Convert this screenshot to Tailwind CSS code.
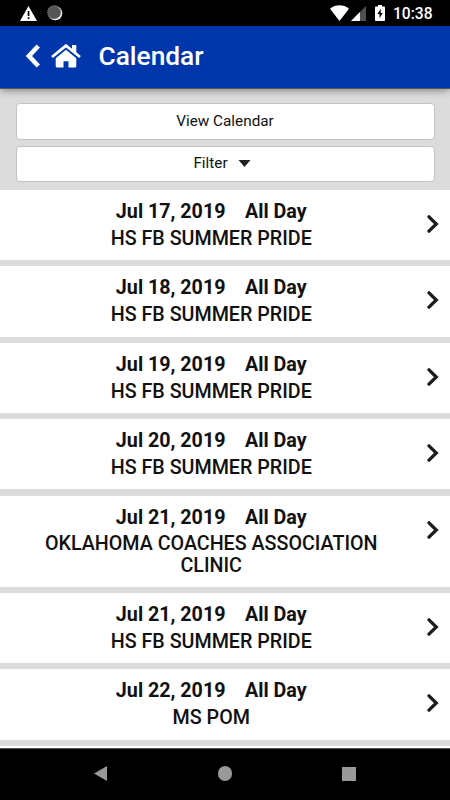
<!DOCTYPE html>
<html lang="en">
<head>
<meta charset="utf-8">
<title>Calendar</title>
<script src="https://cdn.jsdelivr.net/npm/@tailwindcss/browser@4"></script>
</head>
<body class="w-[450px] h-[800px] overflow-hidden bg-[#dcdcdc] font-['Roboto',sans-serif] text-[#111] flex flex-col">
<div class="h-[26px] shrink-0 bg-black text-white flex items-center pl-5 pr-[17px]">
  <svg class="w-[17px] h-[15px]" viewBox="0 0 17 15"><path d="M8.5 0L17 15H0z" fill="#fff"/><path d="M7.7 5h1.7v5H7.7zM7.7 11.2h1.7v1.7H7.7z" fill="#000"/></svg>
  <svg class="w-4 h-4 ml-[10px]" viewBox="0 0 16 16"><circle cx="8.3" cy="8.3" r="7" fill="#fff"/><circle cx="7.3" cy="7.3" r="6.6" fill="#555" stroke="#888" stroke-width="1.2" stroke-dasharray="1 1"/></svg>
  <div class="grow"></div>
  <svg class="w-[19px] h-[16px]" viewBox="0 0 19 16"><path d="M0 3.800C5.500-.8 13.500-.8 19 3.800L9.500 16z" fill="#fff"/></svg>
  <svg class="w-[15px] h-[15px] ml-[2px] mt-px" viewBox="0 0 16 16"><path d="M16 0V16H0z" fill="#505050"/><path d="M9.500 6.500V16H0z" fill="#fff"/></svg>
  <svg class="w-[10px] h-4 ml-[9px]" viewBox="0 0 10 16"><path d="M3 0h4v1.500h2q1 0 1 1V15q0 1-1 1H1q-1 0-1-1V2.500q0-1 1-1h2z" fill="#fff"/><path d="M5.700 3.700L2.500 9h2v4.300L7.700 8h-2z" fill="#000"/></svg>
  <span class="ml-[8px] mt-[3px] text-[15.600px] leading-none font-medium w-[40px] whitespace-nowrap">10:38</span>
</div>
<header class="relative z-10 h-[62px] shrink-0 bg-[#0036ab] flex items-center pl-[26px] text-white shadow-[0_1px_0_#555,0_2px_8px_rgba(0,0,0,.45)]">
  <svg class="w-[14px] h-[24px] mt-[-2px]" viewBox="0 0 14 24"><path d="M12.300 2L3 12l9.300 10" fill="none" stroke="#fff" stroke-width="4.600"/></svg>
  <svg class="w-[30px] h-6 ml-[11px] mt-[-2px]" viewBox="0 0 30 24"><path d="M1 13L15 1.600 29 13" fill="none" stroke="#fff" stroke-width="2.800"/><path d="M21 1h4.300v9.200L21 6.500zM15 5.700L25.300 14.200V22q0 1.500-1.500 1.500H17.500v-6.200h-5v6.200H6.200Q4.700 23.500 4.700 22v-7.800z" fill="#fff"/></svg>
  <h1 class="ml-[17.500px] mt-[-2px] text-[26.300px] leading-8 font-medium">Calendar</h1>
</header>
<div class="h-[102px] shrink-0 px-[15.500px] pt-[15px] flex flex-col gap-[6px] text-[15.300px]">
  <button class="h-[37px] w-full rounded bg-white border border-[#c3c3c3]">View Calendar</button>
  <button class="h-[36px] w-full rounded bg-white border border-[#c3c3c3] flex items-center justify-center gap-[10px] pr-[6px] pb-px">Filter<svg class="w-[13px] h-[7px]" viewBox="0 0 12 7"><path d="M0 0h12L6 7z" fill="#222"/></svg></button>
</div>
<main id="list" class="grow overflow-hidden flex flex-col gap-[6.200px]"></main>
<nav class="h-[52px] shrink-0 bg-black border-t border-[#555] flex items-center pl-[94px] pb-[2px]">
  <svg class="w-[13px] h-[15px]" viewBox="0 0 13 15"><path d="M13 0v15L0 7.500z" fill="#999"/></svg>
  <div class="ml-[110.500px] w-[14.500px] h-[14.500px] rounded-full bg-[#999]"></div>
  <div class="ml-[110px] w-[14px] h-[14px] bg-[#999]"></div>
</nav>
<script>
const events = [
  ['Jul 17, 2019', 'HS FB SUMMER PRIDE'],
  ['Jul 18, 2019', 'HS FB SUMMER PRIDE'],
  ['Jul 19, 2019', 'HS FB SUMMER PRIDE'],
  ['Jul 20, 2019', 'HS FB SUMMER PRIDE'],
  ['Jul 21, 2019', 'OKLAHOMA COACHES ASSOCIATION CLINIC'],
  ['Jul 21, 2019', 'HS FB SUMMER PRIDE'],
  ['Jul 22, 2019', 'MS POM'],
  ['', '']
];
document.getElementById('list').innerHTML = events.map(([date, title]) => `
  <article class="shrink-0 min-h-[70.200px] bg-white flex pt-[11px] pb-[11px] pr-[11px]">
    <div class="grow pr-[4.500px] text-center text-[19.700px] leading-[21.200px]">
      <div class="flex justify-center gap-[19.500px] font-bold"><span>${date}</span><span>${date && 'All Day'}</span></div>
      <div class="mt-[5.700px] px-[20px] font-medium">${title}</div>
    </div>
    <svg class="shrink-0 w-3 h-[18px] mt-[14px]" viewBox="0 0 12 18"><path d="M2 1.800L9.300 9 2 16.200" fill="none" stroke="#1c1c1c" stroke-width="3.300" stroke-linecap="round"/></svg>
  </article>`).join('');
</script>
</body>
</html>
